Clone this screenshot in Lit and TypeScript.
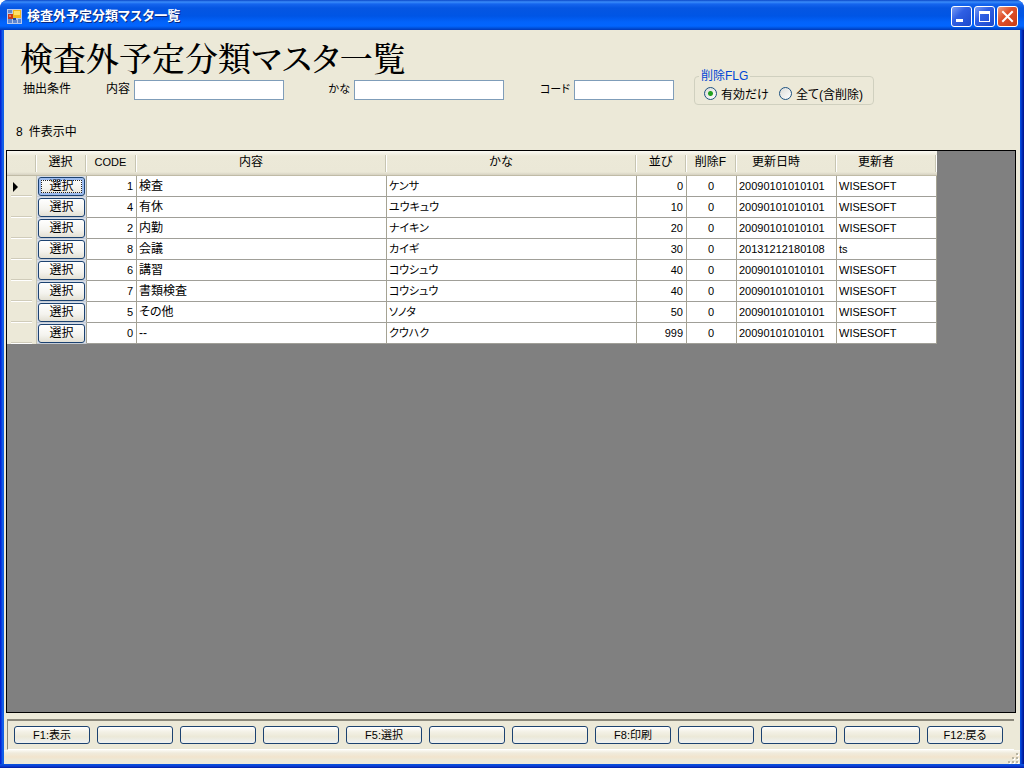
import { LitElement, html, css } from "lit";
import { customElement, state } from "lit/decorators.js";

interface Row {
  code: number;
  name: string;
  kana: string;
  order: number;
  deleted: number;
  updatedAt: string;
  updatedBy: string;
}

const ROWS: Row[] = [
  { code: 1, name: "検査", kana: "ケンサ", order: 0, deleted: 0, updatedAt: "20090101010101", updatedBy: "WISESOFT" },
  { code: 4, name: "有休", kana: "ユウキュウ", order: 10, deleted: 0, updatedAt: "20090101010101", updatedBy: "WISESOFT" },
  { code: 2, name: "内勤", kana: "ナイキン", order: 20, deleted: 0, updatedAt: "20090101010101", updatedBy: "WISESOFT" },
  { code: 8, name: "会議", kana: "カイギ", order: 30, deleted: 0, updatedAt: "20131212180108", updatedBy: "ts" },
  { code: 6, name: "講習", kana: "コウシュウ", order: 40, deleted: 0, updatedAt: "20090101010101", updatedBy: "WISESOFT" },
  { code: 7, name: "書類検査", kana: "コウシュウ", order: 40, deleted: 0, updatedAt: "20090101010101", updatedBy: "WISESOFT" },
  { code: 5, name: "その他", kana: "ソノタ", order: 50, deleted: 0, updatedAt: "20090101010101", updatedBy: "WISESOFT" },
  { code: 0, name: "--", kana: "クウハク", order: 999, deleted: 0, updatedAt: "20090101010101", updatedBy: "WISESOFT" },
];

const FUNCTION_KEYS = ["F1:表示", "", "", "", "F5:選択", "", "", "F8:印刷", "", "", "", "F12:戻る"];

@customElement("app-root")
export class AppRoot extends LitElement {
  @state() private current = 0;

  static styles = css`
    :host {
      display: block;
      font-family: "Liberation Sans", "Noto Sans CJK JP", sans-serif;
      font-size: 12px;
      font-feature-settings: "palt";
      color: #000;
      background: #fff;
    }
    * {
      box-sizing: border-box;
    }
    button,
    input {
      font: inherit;
      font-feature-settings: inherit;
      color: inherit;
    }
    .window {
      display: flex;
      flex-direction: column;
      min-height: 100vh;
      border-radius: 8px 8px 0 0;
      background: #0a48e0;
      overflow: hidden;
    }
    .titlebar {
      display: flex;
      align-items: center;
      height: 30px;
      padding: 2px 6px 0 7px;
      background: linear-gradient(
        #0a47c8 0,
        #3a8cfa 2px,
        #1565ee 4px,
        #0556e2 8px,
        #0055e5 16px,
        #0263fb 22px,
        #0265ff 26px,
        #0052dc 28px,
        #0038b8 30px
      );
    }
    .app-icon {
      width: 15px;
      height: 15px;
      margin-right: 5px;
    }
    .caption {
      flex: 1;
      font-size: 13px;
      font-weight: bold;
      line-height: 20px;
      color: #fff;
      text-shadow: 1px 1px 0 #0a2a80;
    }
    .window-buttons {
      display: flex;
      gap: 2px;
    }
    .window-button {
      display: block;
      width: 21px;
      height: 21px;
      padding: 0;
      border: 1px solid #fff;
      border-radius: 3px;
      background: linear-gradient(135deg, #7a9cf4, #2f5fe4 40%, #1c49cc);
    }
    .window-button.close {
      background: linear-gradient(135deg, #f0a080, #e0512c 40%, #c83c14);
    }
    .window-button svg {
      display: block;
    }
    .frame {
      display: flex;
      flex: 1;
      flex-direction: column;
      padding: 0 4px 4px;
      background:
        linear-gradient(#0855dd, #0c3fd8 50%, #001ea0) bottom / 100% 4px no-repeat,
        linear-gradient(90deg, #0019cf, #0831d9 1px, #166aee 3px, #0855dd 4px) left / 4px 100% no-repeat,
        linear-gradient(270deg, #00138c, #001ea0 1px, #0441d8 3px, #0855dd 4px) right / 4px 100% no-repeat;
    }
    .client {
      display: flex;
      flex: 1;
      flex-direction: column;
      background: #ece9d8;
    }
    h1 {
      margin: 0;
      padding: 14px 0 0 16px;
      font-family: "MS PMincho", "Noto Serif CJK JP", "Noto Sans CJK JP", serif;
      font-size: 33px;
      font-weight: 500;
      line-height: 26px;
    }
    .filters {
      display: flex;
      align-items: flex-start;
      padding-left: 19px;
    }
    .filter-title,
    .field {
      margin-top: 10px;
      line-height: 19px;
    }
    .filter-title {
      width: 48px;
    }
    .field {
      display: flex;
      justify-content: flex-end;
      gap: 4px;
    }
    .field.content {
      width: 213px;
    }
    .field.kana {
      width: 220px;
    }
    .field.code {
      width: 170px;
    }
    .field.kana,
    .field.code {
      font-size: 11px;
    }
    .field input {
      width: 150px;
      height: 20px;
      padding: 0 2px;
      border: 1px solid #7f9db9;
      border-radius: 0;
      background: #fff;
      outline: none;
    }
    .field.code input {
      width: 100px;
    }
    fieldset {
      display: flex;
      gap: 10px;
      width: 180px;
      height: 35px;
      margin: 0 0 0 20px;
      padding: 2px 6px 0 9px;
      border: 1px solid #d0d0bf;
      border-radius: 4px;
    }
    legend {
      margin-left: -5px;
      padding: 0 2px;
      line-height: 12px;
      color: #0046d5;
    }
    .radio {
      display: flex;
      align-items: center;
      gap: 4px;
      height: 18px;
      white-space: nowrap;
    }
    .radio input {
      appearance: none;
      width: 13px;
      height: 13px;
      margin: 0;
      border: 1px solid #1c5180;
      border-radius: 50%;
      background: linear-gradient(135deg, #dcdcd7, #fff);
    }
    .radio input:checked {
      background: radial-gradient(circle, #21a121 0 2px, transparent 3px), linear-gradient(135deg, #dcdcd7, #fff);
    }
    .count {
      display: flex;
      gap: 6px;
      margin: 18px 0 9px 12px;
      line-height: 18px;
    }
    .grid {
      flex: 1;
      margin: 0 4px 0 2px;
      border: 1px solid #000;
      background: #808080;
    }
    table {
      table-layout: fixed;
      width: 930px;
      border-collapse: separate;
      border-spacing: 0;
    }
    .col-mark {
      width: 30px;
    }
    .col-small {
      width: 50px;
    }
    .col-large {
      width: 250px;
    }
    .col-medium {
      width: 100px;
    }
    th,
    td {
      padding: 0 3px 0 2px;
      font-weight: normal;
      line-height: 20px;
      text-align: left;
      white-space: nowrap;
      overflow: hidden;
    }
    thead th {
      height: 25px;
      padding: 0 3px 2px 0;
      border-bottom: 1px solid #c0bba6;
      background:
        linear-gradient(#c7c5b2, #c7c5b2) right 1px top 4px / 1px 17px no-repeat,
        linear-gradient(#fff, #fff) right 0 top 4px / 1px 17px no-repeat,
        linear-gradient(#fbfaf3, #ece9d8 5px, #ebe8d7 21px, #d6d2c2 24px);
      text-align: center;
    }
    thead th.wide {
      padding-right: 22px;
    }
    .compact {
      font-size: 11px;
    }
    tbody td {
      height: 21px;
      border-right: 1px solid #a5a394;
      border-bottom: 1px solid #a09f98;
      background: #fff;
    }
    tbody th {
      height: 21px;
      padding: 0 0 0 6px;
      border-right: 1px solid #c7c5b2;
      background:
        linear-gradient(#d0ccba, #d0ccba) left 4px bottom 1px / 21px 1px no-repeat,
        linear-gradient(#fff, #fff) left 4px bottom 0 / 21px 1px no-repeat,
        #ece9d8;
    }
    tbody th svg {
      display: block;
    }
    td.right {
      text-align: right;
    }
    td.center {
      text-align: center;
    }
    tbody td.action {
      padding: 0;
      border-bottom-color: #c5ccd6;
      background: #d6dde8;
    }
    .xp-button {
      display: block;
      width: 100%;
      padding: 0;
      border: 1px solid #1c4270;
      border-radius: 3px;
      background: linear-gradient(#fff, #f4f3ee 60%, #e3e0d4);
      text-align: center;
      white-space: nowrap;
    }
    .pick {
      width: 47px;
      height: 19px;
      margin: 0 auto;
      line-height: 17px;
    }
    .pick.current {
      box-shadow: inset 0 0 0 2px #9dbcf0;
      outline: 1px dotted #222;
      outline-offset: -4px;
    }
    .keys {
      display: grid;
      grid-template-columns: repeat(12, minmax(0, 1fr));
      gap: 7px;
      margin: 6px 6px 0 3px;
      padding: 5px 11px 5px 6px;
      border-top: 2px solid #8b887b;
      border-left: 1px solid #8b887b;
      border-bottom: 1px solid #fff;
    }
    .key {
      height: 18px;
      background: linear-gradient(#fff, #f3f1e6 30%, #ece9d8 60%, #eef1f2);
      font-size: 11px;
      line-height: 16px;
    }
    .status {
      display: flex;
      justify-content: flex-end;
      align-items: flex-end;
      height: 14px;
      background: linear-gradient(#fbfaf5, #f0ebdc 3px, #f2e4cd 7px, #ece9d8 10px);
    }
    .status svg {
      display: block;
    }
  `;

  private renderTitleBar() {
    return html`
      <header class="titlebar">
        <svg class="app-icon" viewBox="0 0 15 15" aria-hidden="true">
          <rect width="15" height="15" fill="#b9c9ea" />
          <rect x="1" y="10" width="4" height="4" fill="#5f86d0" />
          <rect x="6" y="11" width="4" height="3" fill="#5f86d0" />
          <rect x="11" y="10" width="3" height="4" fill="#5f86d0" />
          <rect x="1" y="1" width="4" height="3" fill="#5f86d0" />
          <rect x="1" y="5" width="5" height="5" fill="#c8381c" />
          <rect x="2" y="6" width="2" height="2" fill="#ee7a50" />
          <rect x="6" y="1" width="8" height="8" fill="#f4b71c" />
          <rect x="7" y="2" width="6" height="4" fill="#ffe06a" />
          <rect x="6" y="9" width="3" height="2" fill="#234a9c" />
        </svg>
        <span class="caption">検査外予定分類マスタ一覧</span>
        <div class="window-buttons">
          <button class="window-button" aria-label="最小化">
            <svg width="19" height="19"><rect x="4" y="12" width="7" height="3" fill="#fff" /></svg>
          </button>
          <button class="window-button" aria-label="最大化">
            <svg width="19" height="19">
              <path d="M4 4h11v11H4z M5 7v7h9V7z" fill="#fff" fill-rule="evenodd" />
            </svg>
          </button>
          <button class="window-button close" aria-label="閉じる">
            <svg width="19" height="19"><path d="M5 5l9 9M14 5l-9 9" stroke="#fff" stroke-width="2" stroke-linecap="square" /></svg>
          </button>
        </div>
      </header>
    `;
  }

  private renderRow(row: Row, index: number) {
    const current = index === this.current;
    return html`
      <tr>
        <th scope="row">
          ${current
            ? html`<svg width="6" height="10" aria-label="現在の行"><path d="M0 0l5 5-5 5z" /></svg>`
            : ""}
        </th>
        <td class="action">
          <button class="xp-button pick ${current ? "current" : ""}" @click=${() => (this.current = index)}>選択</button>
        </td>
        <td class="right compact">${row.code}</td>
        <td>${row.name}</td>
        <td class="compact">${row.kana}</td>
        <td class="right compact">${row.order}</td>
        <td class="center compact">${row.deleted}</td>
        <td class="compact">${row.updatedAt}</td>
        <td class="compact">${row.updatedBy}</td>
      </tr>
    `;
  }

  render() {
    return html`
      <div class="window">
        ${this.renderTitleBar()}
        <div class="frame">
          <main class="client">
            <h1>検査外予定分類マスタ一覧</h1>
            <form class="filters" @submit=${(e: Event) => e.preventDefault()}>
              <span class="filter-title">抽出条件</span>
              <div class="field content"><label for="content">内容</label><input id="content" type="text" /></div>
              <div class="field kana"><label for="kana">かな</label><input id="kana" type="text" /></div>
              <div class="field code"><label for="code">コード</label><input id="code" type="text" /></div>
              <fieldset>
                <legend>削除FLG</legend>
                <label class="radio"><input type="radio" name="flag" checked />有効だけ</label>
                <label class="radio"><input type="radio" name="flag" />全て(含削除)</label>
              </fieldset>
            </form>
            <p class="count"><span>${ROWS.length}</span><span>件表示中</span></p>
            <section class="grid">
              <table>
                <colgroup>
                  <col class="col-mark" />
                  <col class="col-small" />
                  <col class="col-small" />
                  <col class="col-large" />
                  <col class="col-large" />
                  <col class="col-small" />
                  <col class="col-small" />
                  <col class="col-medium" />
                  <col class="col-medium" />
                </colgroup>
                <thead>
                  <tr>
                    <th></th>
                    <th scope="col">選択</th>
                    <th scope="col" class="compact">CODE</th>
                    <th scope="col" class="wide">内容</th>
                    <th scope="col" class="wide">かな</th>
                    <th scope="col">並び</th>
                    <th scope="col">削除F</th>
                    <th scope="col" class="wide">更新日時</th>
                    <th scope="col" class="wide">更新者</th>
                  </tr>
                </thead>
                <tbody>
                  ${ROWS.map((row, index) => this.renderRow(row, index))}
                </tbody>
              </table>
            </section>
            <nav class="keys">
              ${FUNCTION_KEYS.map(
                (label, i) => html`<button class="xp-button key" aria-label=${label || `F${i + 1}`}>${label}</button>`
              )}
            </nav>
            <footer class="status">
              <svg width="12" height="12" aria-hidden="true">
                <g fill="#fff">
                  <path d="M9 2h2v2H9zM5 6h2v2H5zM9 6h2v2H9zM1 10h2v2H1zM5 10h2v2H5zM9 10h2v2H9z" />
                </g>
                <g fill="#b8b4a2">
                  <path d="M8 1h2v2H8zM4 5h2v2H4zM8 5h2v2H8zM0 9h2v2H0zM4 9h2v2H4zM8 9h2v2H8z" />
                </g>
              </svg>
            </footer>
          </main>
        </div>
      </div>
    `;
  }
}
